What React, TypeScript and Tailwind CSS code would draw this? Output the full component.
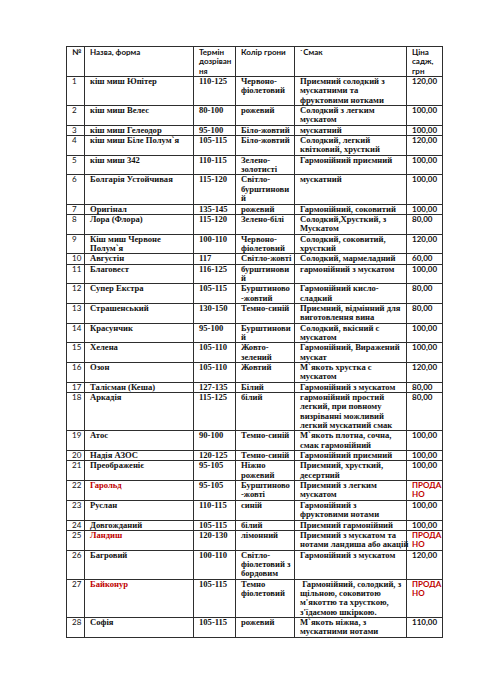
import React from 'react';

type Row = {
  n: number;
  name: string[];
  term: string;
  color: string[];
  taste: string[];
  price: string[];
  sold?: boolean;
};

const SOLD = ['ПРОДА', 'НО'];

const ROWS: Row[] = [
  { n: 1, name: ['кіш миш Юпітер'], term: '110-125', color: ['Червоно-', 'фіолетовий'], taste: ['Приємний солодкий з', 'мускатними та', 'фруктовими нотками'], price: ['120,00'] },
  { n: 2, name: ['кіш миш Велес'], term: '80-100', color: ['рожевий'], taste: ['Солодкий з легким', 'мускатом'], price: ['100,00'] },
  { n: 3, name: ['кіш миш Гелеодор'], term: '95-100', color: ['Біло-жовтий'], taste: ['мускатний'], price: ['100,00'] },
  { n: 4, name: ['кіш миш Біле Полум`я'], term: '105-115', color: ['Біло-жовтий'], taste: ['Солодкий, легкий', 'квітковий, хрусткий'], price: ['120,00'] },
  { n: 5, name: ['кіш миш 342'], term: '110-115', color: ['Зелено-', 'золотисті'], taste: ['Гармонійний приємний'], price: ['100,00'] },
  { n: 6, name: ['Болгарія Устойчивая'], term: '115-120', color: ['Світло-', 'бурштинови', 'й'], taste: ['мускатний'], price: ['100,00'] },
  { n: 7, name: ['Оригінал'], term: '135-145', color: ['рожевий'], taste: ['Гармонійний, соковитий'], price: ['100,00'] },
  { n: 8, name: ['Лора (Флора)'], term: '115-120', color: ['Зелено-білі'], taste: ['Солодкий,Хрусткий, з', 'Мускатом'], price: ['80,00'] },
  { n: 9, name: ['Кіш миш Червоне', 'Полум`я'], term: '100-110', color: ['Червоно-', 'фіолетовий'], taste: ['Солодкий, соковитий,', 'хрусткий'], price: ['120,00'] },
  { n: 10, name: ['Августін'], term: '117', color: ['Світло-жовті'], taste: ['Солодкий, мармеладний'], price: ['60,00'] },
  { n: 11, name: ['Благовест'], term: '116-125', color: ['бурштинови', 'й'], taste: ['гармонійний з мускатом'], price: ['100,00'] },
  { n: 12, name: ['Супер Екстра'], term: '105-115', color: ['Бурштиново', '-жовтий'], taste: ['Гармонійний кисло-', 'сладкий'], price: ['80,00'] },
  { n: 13, name: ['Страшенський'], term: '130-150', color: ['Темно-синій'], taste: ['Приємний, відмінний для', 'виготовлення вина'], price: ['80,00'] },
  { n: 14, name: ['Красунчик'], term: '95-100', color: ['Бурштинови', 'й'], taste: ['Солодкий, вкісний с', 'мускатом'], price: ['100,00'] },
  { n: 15, name: ['Хелена'], term: '105-110', color: ['Жовто-', 'зелений'], taste: ['Гармонійний, Виражений', 'мускат'], price: ['100,00'] },
  { n: 16, name: ['Озон'], term: '105-110', color: ['Жовтий'], taste: ['М`якоть хрустка с', 'мускатом'], price: ['120,00'] },
  { n: 17, name: ['Талісман (Кеша)'], term: '127-135', color: ['Білий'], taste: ['Гармонійний з мускатом'], price: ['80,00'] },
  { n: 18, name: ['Аркадія'], term: '115-125', color: ['білий'], taste: ['гармонійний простий', 'легкий, при повному', 'визріванні можливий', 'легкий мускатний смак'], price: ['80,00'] },
  { n: 19, name: ['Атос'], term: '90-100', color: ['Темно-синій'], taste: ['М`якоть плотна, сочна,', 'смак гармонійний'], price: ['100,00'] },
  { n: 20, name: ['Надія АЗОС'], term: '120-125', color: ['Темно-синій'], taste: ['Гармонійний приємний'], price: ['100,00'] },
  { n: 21, name: ['Преображеніє'], term: '95-105', color: ['Ніжно', 'рожевий'], taste: ['Приємний, хрусткий,', 'десертний'], price: ['100,00'] },
  { n: 22, name: ['Гарольд'], term: '95-105', color: ['Бурштиново', '-жовті'], taste: ['Приємний з легким', 'мускатом'], price: SOLD, sold: true },
  { n: 23, name: ['Руслан'], term: '110-115', color: ['синій'], taste: ['Гармонійний з', 'фруктовими нотами'], price: ['100,00'] },
  { n: 24, name: ['Довгожданий'], term: '105-115', color: ['білий'], taste: ['Приємний гармонійний'], price: ['100,00'] },
  { n: 25, name: ['Ландиш'], term: '120-130', color: ['лімонний'], taste: ['Приємний з мускатом та', 'нотами ландиша або акацій'], price: SOLD, sold: true },
  { n: 26, name: ['Багровий'], term: '100-110', color: ['Світло-', 'фіолетовий з', 'бордовим'], taste: ['Гармонійний з мускатом'], price: ['120,00'] },
  { n: 27, name: ['Байконур'], term: '105-115', color: ['Темно', 'фіолетовий'], taste: ['\u00a0Гармонійний, солодкий, з', 'щільною, соковитою', "м'якоттю та хрусткою,", "з'їдаємою шкіркою."], price: SOLD, sold: true },
  { n: 28, name: ['Софія'], term: '105-115', color: ['рожевий'], taste: ['М`якоть ніжна, з', 'мускатними нотами'], price: ['110,00'] },
];

const sans = "font-['Lato','Liberation_Sans',sans-serif] font-bold text-[8px] leading-[9.35px]";
const serif = "font-['Liberation_Serif','DejaVu_Serif',serif] font-bold text-[8.6px] leading-[9.35px]";
const cell = 'border border-[#2e2e2e] align-top px-[5px] py-0 whitespace-nowrap';

const Lines = ({ lines }: { lines: string[] }) => (
  <>
    {lines.map((l, i) => (
      <div key={i}>{l}</div>
    ))}
  </>
);

export default function App() {
  return (
    <div className="w-[494px] h-[699px] bg-white pt-[46px] pl-[66px] text-[#111]">
      <table className="table-fixed border-collapse w-[376px]">
        <colgroup>
          <col className="w-[18px]" />
          <col className="w-[109px]" />
          <col className="w-[42px]" />
          <col className="w-[59px]" />
          <col className="w-[112px]" />
          <col className="w-[36px]" />
        </colgroup>
        <thead>
          <tr className={sans}>
            <th className={`${cell} text-left font-bold pt-[1px] pb-[1px]`}>№</th>
            <th className={`${cell} text-left font-bold pt-[1px]`}>Назва, форма</th>
            <th className={`${cell} text-left font-bold pt-[1px]`}>
              <Lines lines={['Термін', 'дозріван', 'ня']} />
            </th>
            <th className={`${cell} text-left font-bold pt-[1px]`}>Колір грони</th>
            <th className={`${cell} text-left font-bold pt-[1px]`}>`Смак</th>
            <th className={`${cell} text-left font-bold pt-[1px]`}>
              <Lines lines={['Ціна', 'садж,', 'грн']} />
            </th>
          </tr>
        </thead>
        <tbody>
          {ROWS.map((r) => (
            <tr key={r.n}>
              <td className={`${cell} ${sans} font-normal`}>{r.n}</td>
              <td className={`${cell} ${serif} ${r.sold ? 'text-[#c00000]' : ''}`}>
                <Lines lines={r.name} />
              </td>
              <td className={`${cell} ${serif}`}>{r.term}</td>
              <td className={`${cell} ${serif}`}>
                <Lines lines={r.color} />
              </td>
              <td className={`${cell} ${serif}`}>
                <Lines lines={r.taste} />
              </td>
              <td className={`${cell} ${sans} ${r.sold ? 'text-[#c00000]' : ''}`}>
                <Lines lines={r.price} />
              </td>
            </tr>
          ))}
        </tbody>
      </table>
    </div>
  );
}
